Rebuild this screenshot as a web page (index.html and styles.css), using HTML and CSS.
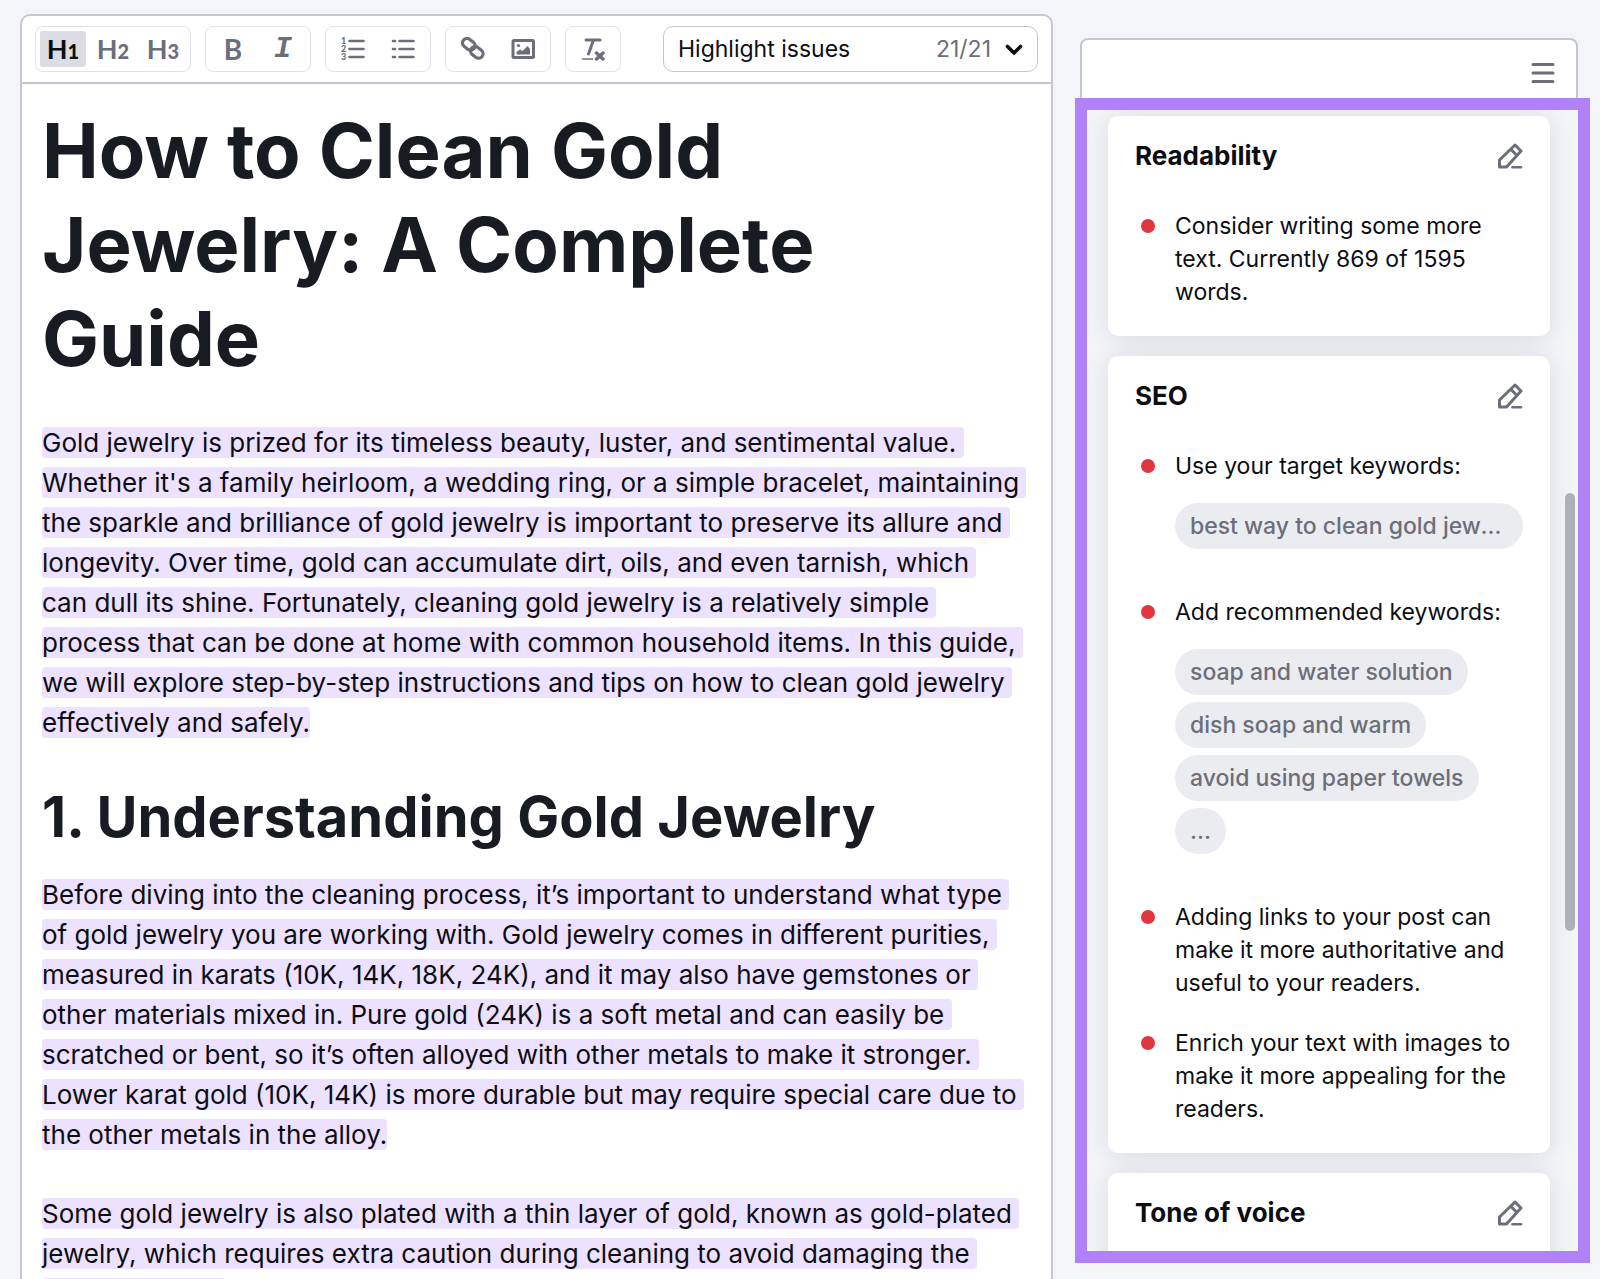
FILE: index.html
```
<!DOCTYPE html>
<html lang="en">
<head>
    <meta charset="UTF-8">
    <meta name="viewport" content="width=device-width, initial-scale=1.0">
    <title>How to Clean Gold Jewelry: A Complete Guide</title>
    <link rel="stylesheet" href="styles.css">
</head>
<body>

    <!-- Shared icons -->
    <svg class="sprite" aria-hidden="true">
        <symbol id="icon-edit" viewBox="0 0 26 26">
            <path d="M2.500 24v-7L18 2l6 6L9.500 24zM14 6.500l6 6" fill="none" stroke="currentColor" stroke-width="3" stroke-linejoin="round"/>
            <path d="M15.500 24.200h8.500" fill="none" stroke="currentColor" stroke-width="2.600" stroke-linecap="round"/>
        </symbol>
    </svg>

    <div class="page">
        <main class="editor">
            <div class="toolbar">
                <div class="group">
                    <button type="button" class="tool heading active">H<sub>1</sub></button>
                    <button type="button" class="tool heading">H<sub>2</sub></button>
                    <button type="button" class="tool heading">H<sub>3</sub></button>
                </div>
                <div class="group">
                    <button type="button" class="tool bold">B</button>
                    <button type="button" class="tool italic">I</button>
                </div>
                <div class="group">
                    <button type="button" class="tool" aria-label="Numbered list">
                        <svg width="24" height="24" viewBox="0 0 24 24">
                            <g class="digits"><text x="0" y="7">1</text><text x="0" y="15">2</text><text x="0" y="23">3</text></g>
                            <path d="M8.500 4h14M8.500 12h14M8.500 20h14" fill="none" stroke="currentColor" stroke-width="2.600" stroke-linecap="round"/>
                        </svg>
                    </button>
                    <button type="button" class="tool" aria-label="Bulleted list">
                        <svg width="24" height="24" viewBox="0 0 24 24">
                            <path d="M2 4h2M2 12h2M2 20h2M8.500 4h14M8.500 12h14M8.500 20h14" fill="none" stroke="currentColor" stroke-width="2.600" stroke-linecap="round"/>
                        </svg>
                    </button>
                </div>
                <div class="group">
                    <button type="button" class="tool" aria-label="Link">
                        <svg width="24" height="24" viewBox="0 0 24 24">
                            <g fill="none" stroke="currentColor" stroke-width="3.200">
                                <rect x="1" y="3" width="13.500" height="9" rx="4.500" transform="rotate(38 8 7.500)"/>
                                <rect x="9" y="11" width="13.500" height="9" rx="4.500" transform="rotate(38 16 15.500)"/>
                            </g>
                        </svg>
                    </button>
                    <button type="button" class="tool" aria-label="Image">
                        <svg width="24" height="24" viewBox="0 0 24 24">
                            <rect x="2" y="3.500" width="20.500" height="17" rx="1" fill="none" stroke="currentColor" stroke-width="3"/>
                            <circle cx="7.500" cy="8.500" r="1.600" fill="currentColor"/>
                            <path d="M5.500 17.500v-2.500l3.500-2.500 2.500 1.500 5-5 2.500 3v5.500z" fill="currentColor"/>
                        </svg>
                    </button>
                </div>
                <div class="group">
                    <button type="button" class="tool" aria-label="Clear formatting">
                        <svg width="24" height="24" viewBox="0 0 24 24">
                            <path d="M5 3h14M12.500 3L7.500 17" fill="none" stroke="currentColor" stroke-width="3" stroke-linecap="round"/>
                            <path d="M1.500 22h10" fill="none" stroke="currentColor" stroke-width="1.600" stroke-linecap="round"/>
                            <path d="M15.500 16l6.500 6M22 16l-6.500 6" fill="none" stroke="currentColor" stroke-width="3.400" stroke-linecap="round"/>
                        </svg>
                    </button>
                </div>

                <div class="issues">
                    <select class="issues-select" aria-label="Issues filter">
                        <option>Highlight issues</option>
                    </select>
                    <span class="issues-count">21/21</span>
                    <svg class="issues-arrow" width="18" height="12" viewBox="0 0 18 12" aria-hidden="true">
                        <path d="M2.500 3.500L9 10l6.500-6.500" fill="none" stroke="currentColor" stroke-width="3.600" stroke-linecap="round" stroke-linejoin="round"/>
                    </svg>
                </div>
            </div>

            <article class="content">
                <h1>How to Clean Gold Jewelry: A Complete Guide</h1>
                <p><mark>Gold jewelry is prized for its timeless beauty, luster, and sentimental value. Whether it's a family heirloom, a wedding ring, or a simple bracelet, maintaining the sparkle and brilliance of gold jewelry is important to preserve its allure and longevity. Over time, gold can accumulate dirt, oils, and even tarnish, which can dull its shine. Fortunately, cleaning gold jewelry is a relatively simple process that can be done at home with common household items. In this guide, we will explore step-by-step instructions and tips on how to clean gold jewelry effectively and safely.</mark></p>
                <h2>1. Understanding Gold Jewelry</h2>
                <p><mark>Before diving into the cleaning process, it’s important to understand what type of gold jewelry you are working with. Gold jewelry comes in different purities, measured in karats (10K, 14K, 18K, 24K), and it may also have gemstones or other materials mixed in. Pure gold (24K) is a soft metal and can easily be scratched or bent, so it’s often alloyed with other metals to make it stronger. Lower karat gold (10K, 14K) is more durable but may require special care due to the other metals in the alloy.</mark></p>
                <p><mark>Some gold jewelry is also plated with a thin layer of gold, known as gold-plated jewelry, which requires extra caution during cleaning to avoid damaging the plated surface.</mark></p>
            </article>
        </main>

        <aside class="sidebar">
            <div class="sidebar-top">
                <button type="button" class="icon-button" aria-label="Menu">
                    <svg width="24" height="24" viewBox="0 0 24 24">
                        <path d="M2 3.500h20M2 12h20M2 20.500h20" fill="none" stroke="currentColor" stroke-width="3" stroke-linecap="round"/>
                    </svg>
                </button>
            </div>

            <div class="suggestions">
                <section class="card">
                    <header class="card-header">
                        <h3>Readability</h3>
                        <button type="button" class="icon-button" aria-label="Edit readability"><svg width="26" height="26"><use href="#icon-edit"/></svg></button>
                    </header>
                    <ul class="tips">
                        <li>Consider writing some more text. Currently 869 of 1595 words.</li>
                    </ul>
                </section>

                <section class="card">
                    <header class="card-header">
                        <h3>SEO</h3>
                        <button type="button" class="icon-button" aria-label="Edit SEO"><svg width="26" height="26"><use href="#icon-edit"/></svg></button>
                    </header>
                    <ul class="tips">
                        <li>Use your target keywords:
                            <div class="chips">
                                <span class="chip">best way to clean gold jewelry</span>
                            </div>
                        </li>
                        <li>Add recommended keywords:
                            <div class="chips">
                                <span class="chip">soap and water solution</span>
                                <span class="chip">dish soap and warm</span>
                                <span class="chip">avoid using paper towels</span>
                                <span class="chip">...</span>
                            </div>
                        </li>
                        <li>Adding links to your post can make it more authoritative and useful to your readers.</li>
                        <li>Enrich your text with images to make it more appealing for the readers.</li>
                    </ul>
                </section>

                <section class="card">
                    <header class="card-header">
                        <h3>Tone of voice</h3>
                        <button type="button" class="icon-button" aria-label="Edit tone of voice"><svg width="26" height="26"><use href="#icon-edit"/></svg></button>
                    </header>
                </section>

                <div class="scroll-thumb"></div>
            </div>
        </aside>
    </div>

</body>
</html>
```
FILE: styles.css
```
* {
    box-sizing: border-box;
}

body {
    margin: 0;
    height: 100vh;
    overflow: hidden;
    background-color: #f4f5f9;
    color: #0d0e12;
    font-family: Inter, "Liberation Sans", sans-serif;
    font-size: 23px;
}

h1, h2, h3, p, ul {
    margin: 0;
    padding: 0;
}

button {
    padding: 0;
    border: 0;
    background: none;
    color: #6c6e79;
    font: inherit;
    cursor: pointer;
}

svg {
    display: block;
}

.sprite {
    position: absolute;
    width: 0;
    height: 0;
}

.page {
    display: grid;
    grid-template-columns: minmax(0, 1fr) 498px;
    gap: 27px;
    height: 100vh;
    padding: 14px 22px 0 20px;
}

/* Editor */
.editor {
    min-height: 0;
    overflow: hidden;
    background-color: #fff;
    border: 2px solid #c4c7cf;
    border-bottom: 0;
    border-radius: 10px 10px 0 0;
}

.toolbar {
    display: flex;
    align-items: center;
    gap: 14px;
    padding: 10px 13px;
    border-bottom: 2px solid #c4c7cf;
}

.group {
    display: flex;
    gap: 4px;
    padding: 4px;
    border: 1px solid #e0e1e9;
    border-radius: 8px;
}

.tool {
    display: flex;
    align-items: center;
    justify-content: center;
    width: 46px;
    height: 36px;
    border-radius: 3px;
}

.tool.active {
    background-color: #dcdde2;
    color: #0d0e12;
}

.tool.heading {
    font: 700 27px/36px Lato, sans-serif;
}

.tool.heading sub {
    align-self: flex-end;
    font-size: 20px;
    font-weight: 900;
    line-height: 32px;
}

.tool.bold {
    font: 700 28px/36px Lato, sans-serif;
}

.tool.italic {
    font: italic 700 30px/40px "Liberation Mono", monospace;
}

.digits {
    fill: currentColor;
    font: 900 9px Lato, sans-serif;
}

.issues {
    display: grid;
    grid-template-columns: 1fr auto auto;
    align-items: center;
    gap: 14px;
    width: 375px;
    height: 46px;
    margin-left: auto;
    padding-right: 14px;
    border: 1px solid #c4c7cf;
    border-radius: 10px;
}

.issues-select {
    grid-area: 1 / 1 / 2 / 4;
    width: 100%;
    height: 44px;
    padding: 0 14px;
    border: 0;
    background: none;
    color: #0d0e12;
    font: inherit;
    appearance: none;
}

.issues-count,
.issues-arrow {
    grid-row: 1;
    pointer-events: none;
}

.issues-count {
    grid-column: 2;
    color: #6c6e79;
}

.issues-arrow {
    grid-column: 3;
}

.content {
    padding: 19px 31px 0 20px;
}

.content h1 {
    margin-bottom: 38px;
    color: #181b22;
    font-size: 76px;
    font-weight: 700;
    line-height: 94px;
}

.content h2 {
    margin: 39px 0 23px;
    color: #181b22;
    font-size: 56px;
    font-weight: 700;
    line-height: 70px;
}

.content p {
    font-size: 26px;
    line-height: 40px;
    white-space: pre-wrap;
}

.content p + p {
    margin-top: 39px;
}

.content mark {
    background-color: #ece1fe;
    color: inherit;
    border-radius: 4px;
    -webkit-box-decoration-break: clone;
    box-decoration-break: clone;
}

/* Sidebar */
.sidebar {
    display: flex;
    flex-direction: column;
    min-height: 0;
    padding: 24px 0 16px;
}

.sidebar-top {
    display: flex;
    align-items: center;
    justify-content: flex-end;
    height: 60px;
    padding: 8px 21px 0 0;
    background-color: #fff;
    border: 2px solid #c4c7cf;
    border-bottom: 0;
    border-radius: 8px 8px 0 0;
}

.suggestions {
    position: relative;
    display: flex;
    flex: 1;
    flex-direction: column;
    gap: 20px;
    min-height: 0;
    margin: 0 -12px 0 -5px;
    padding: 6px 28px 0 21px;
    overflow: hidden;
    border: 12px solid #b181f9;
}

.card {
    flex: none;
    padding: 24px 27px 27px;
    background-color: #fff;
    border-radius: 10px;
    box-shadow: 0 2px 26px rgba(25, 27, 35, 0.12);
}

.card-header {
    display: flex;
    align-items: center;
    justify-content: space-between;
    height: 32px;
    margin-bottom: 38px;
}

.card-header h3 {
    font-size: 26px;
    font-weight: 700;
    line-height: 32px;
}

.tips {
    display: flex;
    flex-direction: column;
    gap: 27px;
    list-style: none;
}

.tips li {
    position: relative;
    padding-left: 40px;
    line-height: 33px;
}

.tips li::before {
    content: "";
    position: absolute;
    top: 9px;
    left: 6px;
    width: 14px;
    height: 14px;
    border-radius: 50%;
    background-color: #e2363f;
}

.chips {
    display: flex;
    flex-direction: column;
    align-items: flex-start;
    gap: 7px;
    margin: 20px 0;
}

.chip {
    max-width: 100%;
    padding: 0 15px;
    overflow: hidden;
    border-radius: 23px;
    background-color: #ebecf0;
    color: #6c6e79;
    font-weight: 500;
    line-height: 46px;
    text-overflow: ellipsis;
    white-space: nowrap;
}

.scroll-thumb {
    position: absolute;
    top: 383px;
    right: 3px;
    width: 10px;
    height: 438px;
    border-radius: 5px;
    background-color: #b0b1b5;
}
```
